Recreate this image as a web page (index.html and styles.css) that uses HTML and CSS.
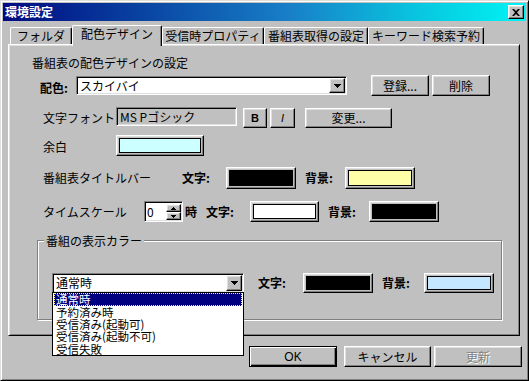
FILE: index.html
```html
<!DOCTYPE html>
<html lang="ja">
<head>
<meta charset="utf-8">
<title>環境設定</title>
<link rel="stylesheet" href="styles.css">
</head>
<body>
<div class="window">
  <div class="titlebar">
    <span class="title">環境設定</span>
    <span class="close raised"><svg width="8" height="7" viewBox="0 0 8 7"><path d="M0 0h2l2 2 2-2h2l-3 3.5 3 3.5h-2l-2-2-2 2h-2l3-3.5z" fill="#000"/></svg></span>
  </div>
  <div class="client">
    <div class="tabs">
      <div class="tab t1">フォルダ</div>
      <div class="tab t2 active">配色デザイン</div>
      <div class="tab t3">受信時プロパティ</div>
      <div class="tab t4">番組表取得の設定</div>
      <div class="tab t5">キーワード検索予約</div>
    </div>
    <div class="panel">
      <div class="heading">番組表の配色デザインの設定</div>

      <div class="row r-scheme">
        <span class="lbl bold l-scheme">配色:</span>
        <div class="combo sunken c-scheme">
          <span class="combo-text">スカイバイ</span>
          <span class="drop raised"><svg width="7" height="4" viewBox="0 0 7 4"><path d="M0 0h7v1h-1v1h-1v1h-1v1h-1v-1h-1v-1h-1v-1h-1z" fill="#000"/></svg></span>
        </div>
        <span class="btn raised b-reg">登録...</span>
        <span class="btn raised b-del">削除</span>
      </div>

      <div class="row r-font">
        <span class="lbl l-font">文字フォント</span>
        <span class="field sunken">MS Pゴシック</span>
        <span class="btn raised b-bold">B</span>
        <span class="btn raised b-ital">I</span>
        <span class="btn raised b-change">変更...</span>
      </div>

      <div class="row r-margin">
        <span class="lbl l-margin">余白</span>
        <span class="swatch raised sw-margin"><span class="chip chip-cyan"></span></span>
      </div>

      <div class="row r-title">
        <span class="lbl l-title">番組表タイトルバー</span>
        <span class="lbl bold l-fg">文字:</span>
        <span class="swatch raised sw70"><span class="chip chip-black"></span></span>
        <span class="lbl bold l-bg">背景:</span>
        <span class="swatch raised sw70"><span class="chip chip-yellow"></span></span>
      </div>

      <div class="row r-time">
        <span class="lbl l-time">タイムスケール</span>
        <span class="spin sunken">
          <span class="spin-text">0</span>
          <span class="spin-btns">
            <span class="spin-btn raised"><svg width="5" height="3" viewBox="0 0 5 3"><path d="M2 0h1v1h1v1h1v1h-5v-1h1v-1h1z" fill="#000"/></svg></span>
            <span class="spin-btn raised"><svg width="5" height="3" viewBox="0 0 5 3"><path d="M0 0h5v1h-1v1h-1v1h-1v-1h-1v-1h-1z" fill="#000"/></svg></span>
          </span>
        </span>
        <span class="lbl bold l-hour">時</span>
        <span class="lbl bold l-fg2">文字:</span>
        <span class="swatch raised sw69"><span class="chip chip-white"></span></span>
        <span class="lbl bold l-bg2">背景:</span>
        <span class="swatch raised sw70"><span class="chip chip-black"></span></span>
      </div>

      <div class="group">
        <span class="legend">番組の表示カラー</span>
        <div class="row r-group">
          <div class="combo sunken c-state">
            <span class="combo-text">通常時</span>
            <span class="drop raised"><svg width="7" height="4" viewBox="0 0 7 4"><path d="M0 0h7v1h-1v1h-1v1h-1v1h-1v-1h-1v-1h-1v-1h-1z" fill="#000"/></svg></span>
            <ul class="droplist">
              <li class="sel">通常時</li>
              <li>予約済み時</li>
              <li>受信済み(起動可)</li>
              <li>受信済み(起動不可)</li>
              <li>受信失敗</li>
            </ul>
          </div>
          <span class="lbl bold l-fg3">文字:</span>
          <span class="swatch raised sw70g"><span class="chip chip-black"></span></span>
          <span class="lbl bold l-bg3">背景:</span>
          <span class="swatch raised sw70g"><span class="chip chip-sky"></span></span>
        </div>
      </div>
    </div>

    <div class="buttons">
      <span class="btn default b-ok">OK</span>
      <span class="btn raised b-cancel">キャンセル</span>
      <span class="btn raised b-apply disabled">更新</span>
    </div>
  </div>
</div>
</body>
</html>
```

FILE: styles.css
```css
* { box-sizing: border-box; }
html, body { margin: 0; padding: 0; }
body {
  width: 529px;
  height: 381px;
  overflow: hidden;
  background: #c0c0c0;
  font-family: "Noto Sans CJK JP", "Noto Sans", sans-serif;
  font-size: 12px;
  color: #000;
}

.raised {
  background: #c0c0c0;
  border: 1px solid;
  border-color: #fff #000 #000 #fff;
  box-shadow: inset -1px -1px #808080, inset 1px 1px #dfdfdf;
}
.sunken {
  background: #fff;
  border: 1px solid;
  border-color: #808080 #fff #fff #808080;
  box-shadow: inset 1px 1px #000, inset -1px -1px #dfdfdf;
}

.window {
  width: 529px;
  height: 381px;
  padding: 2px;
  background: #c0c0c0;
  border: 1px solid;
  border-color: #dfdfdf #000 #000 #dfdfdf;
  box-shadow: inset 1px 1px #fff, inset -1px -1px #808080;
  display: flex;
  flex-direction: column;
}

.titlebar {
  height: 18px;
  flex: none;
  display: flex;
  align-items: center;
  justify-content: space-between;
  padding: 0 2px 0 2px;
  background: linear-gradient(90deg, #000a80 0%, #0840a0 25%, #1880c8 55%, #08c8e0 80%, #00f4f4 100%);
}
.title {
  color: #fff;
  font-weight: bold;
  font-size: 12px;
  line-height: 14px;
}
.close {
  width: 16px;
  height: 14px;
  display: flex;
  align-items: center;
  justify-content: center;
}

.client {
  flex: 1;
  display: flex;
  flex-direction: column;
  padding: 0 4px 0 5px;
}

.tabs {
  margin-top: 3px;
  height: 20px;
  display: flex;
  align-items: flex-end;
  padding-left: 2px;
  position: relative;
  z-index: 2;
}
.tab {
  height: 17px;
  line-height: 16px;
  text-align: center;
  white-space: nowrap;
  background: #c0c0c0;
  border-top: 1px solid #fff;
  border-left: 1px solid #fff;
  border-right: 1px solid #000;
  box-shadow: inset -1px 0 #808080;
  border-radius: 2px 2px 0 0;
}
.tab.active {
  height: 21px;
  margin-bottom: -2px;
}
.t1 { width: 62px; }
.t2 { width: 90px; }
.t3 { width: 102px; }
.t4 { width: 104px; }
.t5 { width: 116px; }

.panel {
  width: 512px;
  height: 292px;
  flex: none;
  padding: 1px;
  border: 1px solid;
  border-color: #fff #000 #000 #fff;
  box-shadow: inset 1px 1px #dfdfdf, inset -1px -1px #808080;
  position: relative;
  z-index: 1;
}

.heading {
  margin: 10px 0 0 22px;
  height: 14px;
  line-height: 14px;
}

.row {
  display: flex;
  align-items: center;
}
.lbl {
  flex: none;
  line-height: 14px;
  white-space: nowrap;
}
.bold { font-weight: bold; }

.r-scheme { margin-top: 5px; height: 21px; }
.l-scheme { margin-left: 30px; width: 36px; padding-top: 4px; }
.combo {
  display: flex;
  align-items: center;
  padding: 1px;
  flex: none;
}
.c-scheme { width: 271px; height: 19px; }
.combo-text { flex: 1; padding-left: 2px; line-height: 14px; white-space: nowrap; }
.drop {
  width: 16px;
  height: 16px;
  flex: none;
  display: flex;
  align-items: center;
  justify-content: center;
}
.c-scheme .drop { height: 15px; }

.btn {
  flex: none;
  display: flex;
  align-items: center;
  justify-content: center;
  line-height: 14px;
  white-space: nowrap;
}
.b-reg { margin-left: 24px; width: 58px; height: 21px; }
.b-del { margin-left: 3px; width: 58px; height: 21px; }

.r-font { margin-top: 11px; height: 21px; align-items: flex-start; }
.l-font { margin-left: 33px; width: 73px; line-height: 21px; }
.field {
  flex: none;
  width: 121px;
  height: 19px;
  background: #c0c0c0;
  padding-left: 3px;
  line-height: 17px;
  white-space: nowrap;
}
.b-bold {
  margin: 1px 0 0 6px; width: 24px; height: 20px;
  font-family: "Liberation Sans", sans-serif; font-weight: bold; font-size: 11px;
}
.b-ital {
  margin: 1px 0 0 3px; width: 25px; height: 20px;
  font-family: "Liberation Sans", sans-serif; font-style: italic; font-size: 11px;
}
.b-change { margin: 1px 0 0 10px; width: 87px; height: 20px; }

.swatch {
  flex: none;
  padding: 2px;
  display: flex;
}
.chip {
  flex: 1;
  border: 1px solid #000;
}
.chip-cyan { background: #ccffff; }
.chip-black { background: #000; }
.chip-yellow { background: #ffffa8; }
.chip-white { background: #fff; }
.chip-sky { background: #c4e6ff; }

.r-margin { margin-top: 7px; height: 21px; }
.l-margin { margin-left: 33px; width: 73px; padding-top: 2px; }
.sw-margin { width: 88px; height: 21px; }

.r-title { margin-top: 11px; height: 22px; }
.l-title { margin-left: 33px; width: 139px; }
.l-fg { width: 44px; }
.l-bg { margin-left: 9px; width: 40px; }
.sw70 { width: 70px; height: 22px; }

.r-time { margin-top: 12px; height: 21px; }
.l-time { margin-left: 33px; width: 101px; }
.spin {
  flex: none;
  width: 39px;
  height: 21px;
  padding: 2px 1px 1px 2px;
  display: flex;
}
.spin-text { flex: 1; line-height: 16px; }
.spin-btns {
  width: 15px;
  display: flex;
  flex-direction: column;
}
.spin-btn {
  flex: 1;
  display: flex;
  align-items: center;
  justify-content: center;
}
.l-hour { margin-left: 2px; width: 12px; }
.l-fg2 { margin-left: 9px; width: 44px; }
.l-bg2 { margin-left: 9px; width: 41px; }
.sw69 { width: 69px; height: 21px; }
.r-time .sw70 { height: 21px; }

.group {
  margin: 18px 0 0 27px;
  width: 465px;
  height: 80px;
  border: 1px solid #808080;
  box-shadow: 1px 1px 0 #fff, inset 1px 1px 0 #fff;
  position: relative;
}
.legend {
  position: absolute;
  top: -7px;
  left: 6px;
  padding: 0 2px;
  background: #c0c0c0;
  line-height: 14px;
}
.r-group { margin-top: 32px; height: 20px; }
.c-state {
  margin-left: 14px;
  width: 192px;
  height: 20px;
  position: relative;
}
.droplist {
  position: absolute;
  top: 18px;
  left: -1px;
  width: 192px;
  margin: 0;
  padding: 0 1px 0 1px;
  list-style: none;
  background: #fff;
  border: 1px solid #000;
  z-index: 5;
  font-size: 11.5px;
}
.droplist li {
  height: 12.2px;
  line-height: 12px;
  padding-left: 2px;
  white-space: nowrap;
}
.droplist li.sel {
  height: 13px;
  line-height: 13px;
  background: #000080;
  color: #fff;
  outline: 1px dotted #ffff80;
  outline-offset: -1px;
}
.l-fg3 { margin-left: 14px; width: 45px; }
.l-bg3 { margin-left: 9px; width: 42px; }
.sw70g { width: 70px; height: 20px; }

.buttons {
  margin-top: 10px;
  display: flex;
  justify-content: flex-end;
}
.default {
  background: #c0c0c0;
  border: 1px solid #000;
  box-shadow: inset 1px 1px #fff, inset -1px -1px #000, inset -2px -2px #808080;
}
.b-ok { width: 88px; height: 21px; font-family: "Liberation Sans", sans-serif; }
.b-cancel { margin-left: 7px; width: 87px; height: 21px; }
.b-apply { margin-left: 3px; width: 88px; height: 21px; }
.disabled { color: #808080; text-shadow: 1px 1px 0 #fff; }
```
